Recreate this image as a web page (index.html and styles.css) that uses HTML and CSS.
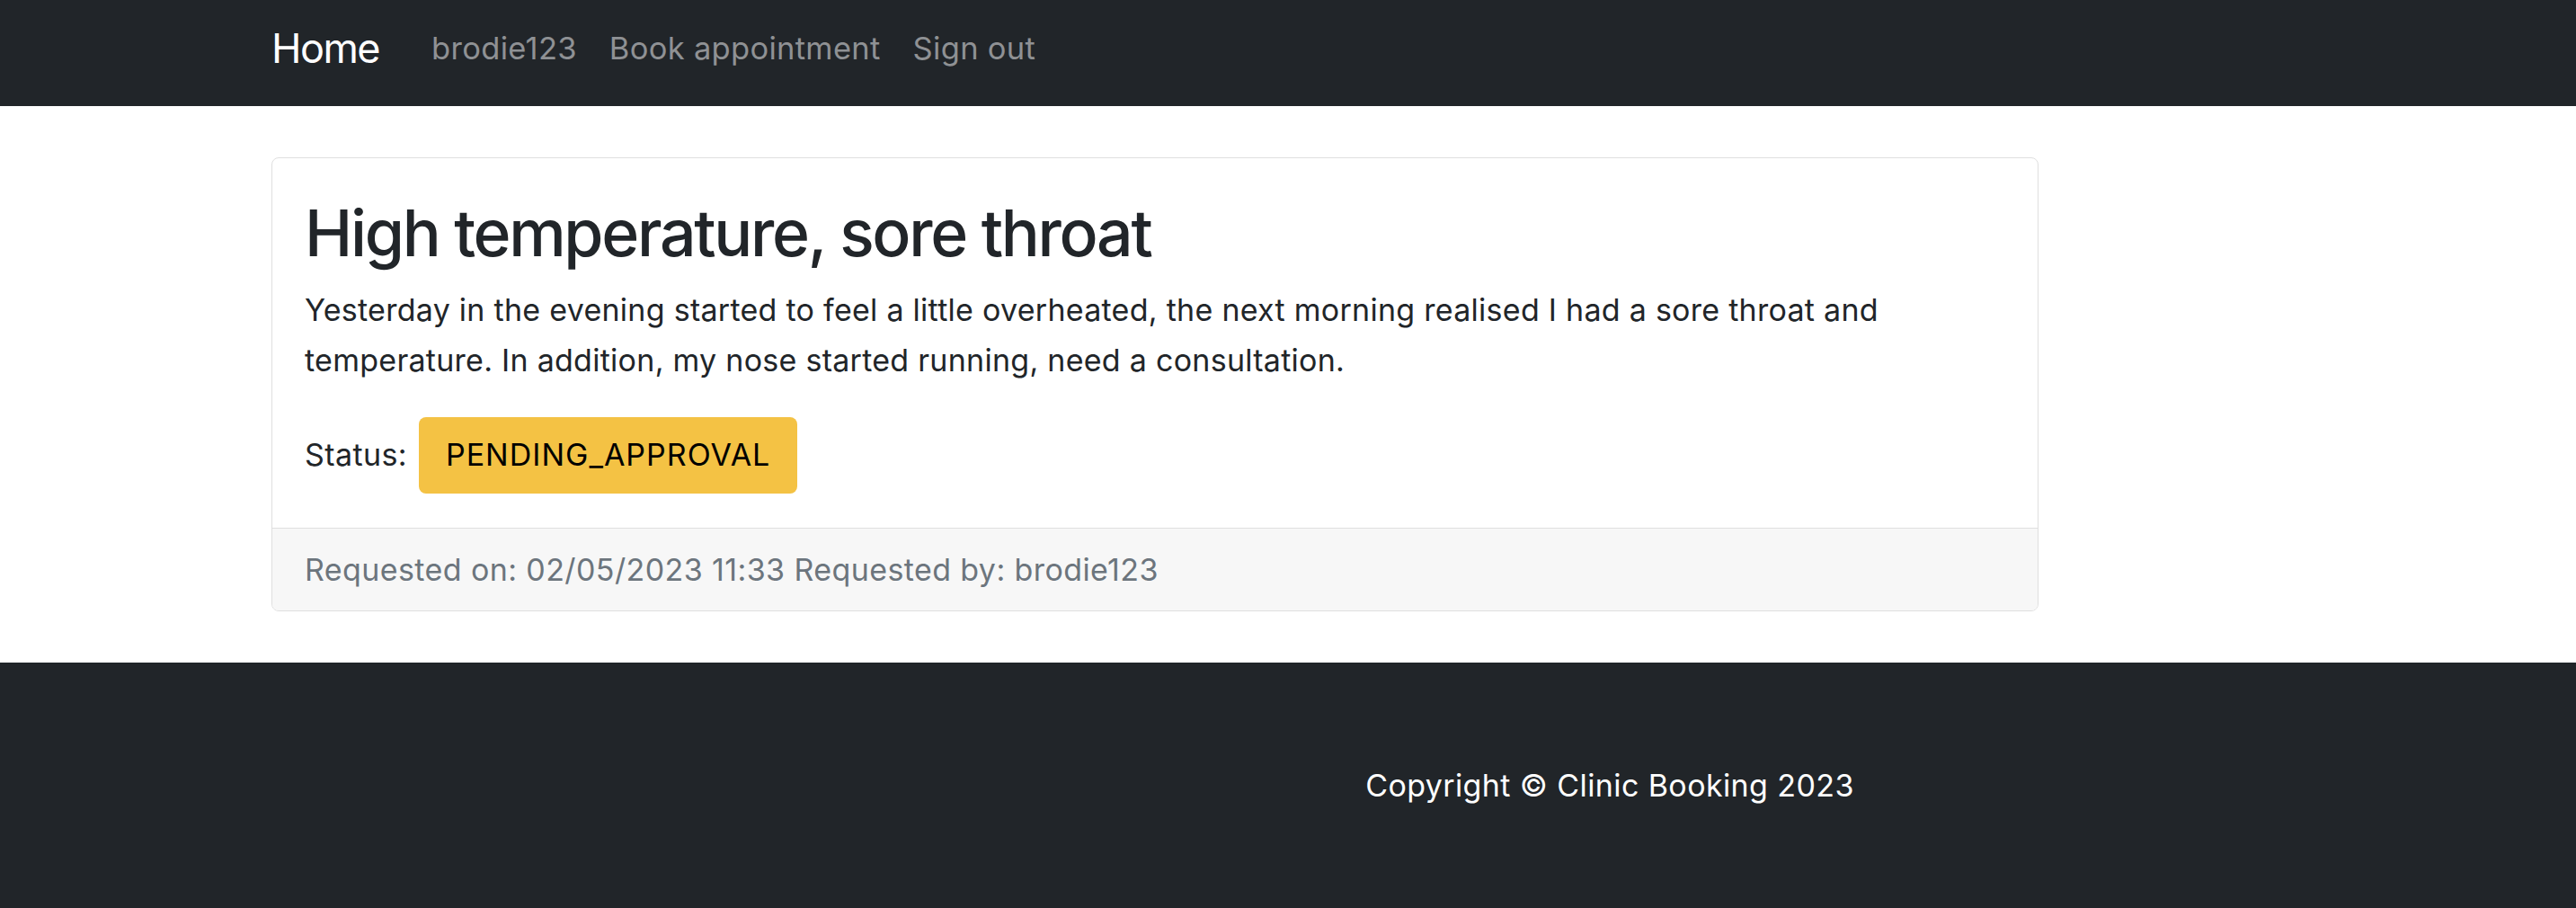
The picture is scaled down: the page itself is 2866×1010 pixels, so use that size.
FILE: index.html
```html
<!DOCTYPE html>
<html lang="en">
<head>
<meta charset="utf-8">
<title>Appointment</title>
<link rel="stylesheet" href="styles.css">
</head>
<body>
<nav class="navbar">
  <div class="container nav-inner">
    <a class="brand" href="#">Home</a>
    <ul class="nav-links">
      <li><a class="nav-link" href="#">brodie123</a></li>
      <li><a class="nav-link" href="#">Book appointment</a></li>
      <li><a class="nav-link" href="#">Sign out</a></li>
    </ul>
  </div>
</nav>
<main class="main">
  <div class="container">
    <div class="card">
      <div class="card-body">
        <h1 class="card-title">High temperature, sore throat</h1>
        <p class="card-text">Yesterday in the evening started to feel a little overheated, the next morning realised I had a sore throat and temperature. In addition, my nose started running, need a consultation.</p>
        <div class="status-row">
          <span class="status-label">Status:</span>
          <span class="badge">PENDING_APPROVAL</span>
        </div>
      </div>
      <div class="card-footer">Requested on: 02/05/2023 11:33 Requested by: brodie123</div>
    </div>
  </div>
</main>
<footer class="footer">
  <div class="container footer-inner">
    <p class="copyright">Copyright &copy; Clinic Booking 2023</p>
  </div>
</footer>
</body>
</html>
```

FILE: styles.css
```css
* { box-sizing: border-box; }
html, body { margin: 0; padding: 0; }
body {
  font-family: Inter, "Noto Sans", "Liberation Sans", sans-serif;
  font-size: 34px;
  letter-spacing: 0.4px;
  color: #212529;
  background: #fff;
}
a { text-decoration: none; }
.container {
  width: 2262px;
  margin: 0 auto;
}
.navbar {
  background: #212529;
  height: 118px;
  padding-bottom: 12px;
  display: flex;
}
.nav-inner {
  display: flex;
  align-items: center;
}
.brand {
  color: #fff;
  font-size: 45px;
  letter-spacing: -1.5px;
  line-height: normal;
  margin-right: 40px;
}
.nav-links {
  list-style: none;
  margin: 0;
  padding: 0;
  display: flex;
  align-items: center;
}
.nav-link {
  display: block;
  color: #8f9194;
  font-size: 34.5px;
  letter-spacing: 0.3px;
  line-height: normal;
  padding: 0 18px;
}
.main {
  padding: 57px 0;
}
.card {
  width: 1966px;
  border: 1px solid #dfdfdf;
  border-radius: 8px;
  overflow: hidden;
}
.card-body {
  padding: 40px 36px 38px;
}
.card-title {
  margin: 0 0 15px;
  font-size: 71.5px;
  font-weight: 500;
  letter-spacing: -2.3px;
  line-height: 86px;
}
.card-text {
  margin: 0 0 35px;
  letter-spacing: 0.27px;
  line-height: 56px;
}
.status-row {
  display: flex;
  align-items: baseline;
  gap: 13px;
  line-height: 56px;
}
.badge {
  background: #f4c244;
  color: #000;
  padding: 14px 30px 15px;
  border-radius: 8px;
  letter-spacing: 1px;
  line-height: 56px;
}
.card-footer {
  background: #f7f7f7;
  border-top: 1px solid #dfdfdf;
  color: #6c757d;
  padding: 18px 36px 17px;
  line-height: 56px;
}
.footer {
  background: #212529;
  padding: 109px 0 110px;
}
.footer-inner {
  display: flex;
  justify-content: center;
  padding-left: 716px;
}
.copyright {
  margin: 0;
  color: #fff;
  line-height: 56px;
}
```
